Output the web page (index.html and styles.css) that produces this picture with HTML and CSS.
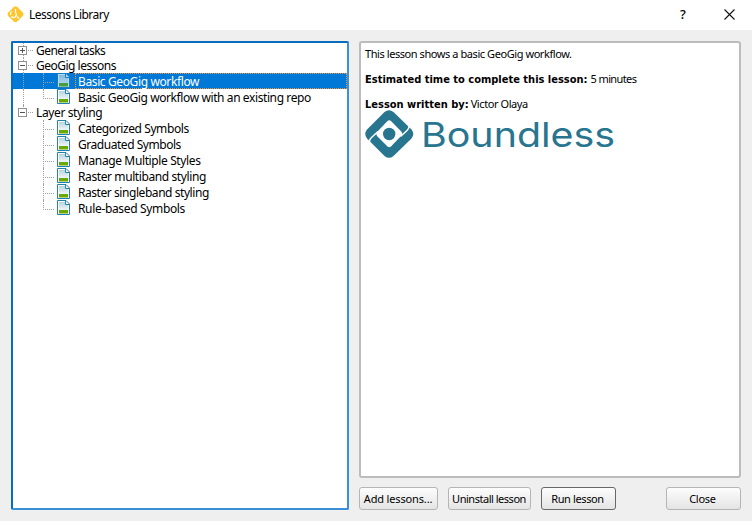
FILE: index.html
```html
<!DOCTYPE html>
<html lang="en">
<head>
<meta charset="utf-8">
<title>Lessons Library</title>
<link rel="stylesheet" href="styles.css">
</head>
<body>
<svg class="defs" width="0" height="0" aria-hidden="true">
  <defs>
    <linearGradient id="sky" x1="0" y1="0" x2="0" y2="1"><stop offset="0" stop-color="#b5d4df"/><stop offset="1" stop-color="#edf5f7"/></linearGradient>
    <symbol id="doc" viewBox="0 0 13 15">
      <path d="M.5.5H9L12.500 4V14.500H.5Z" fill="#fff" stroke="#2280b4"/>
      <path d="M2 2H8V5H11V10H2Z" fill="url(#sky)"/>
      <path d="M2 10H11V13.500H2Z" fill="#69aa00"/>
      <path d="M8.500 1V4.500H12" fill="none" stroke="#2280b4"/>
    </symbol>
  </defs>
</svg>
<div class="window">
  <header class="titlebar">
    <svg class="app-icon" width="17" height="17" viewBox="0 0 17 17"><path d="M6.500 1.200Q8.500-.6 10.500 1.200L15.500 6.200Q17.300 8.200 15.500 10.300L10.500 15.300Q8.500 17 6.500 15.300L1.500 10.300Q-.3 8.200 1.500 6.200Z" fill="#fdc62f"/><path d="M8.500 3V6.500Q10.500 9 8 11Q6 12.300 4.500 10.500M4.500 5.500Q3 7 3.700 9M10 10.500L12 12.500" fill="none" stroke="#fff" stroke-width="1.200"/></svg>
    <h1 class="title">Lessons Library</h1>
    <span class="help">?</span>
    <svg class="close" width="11" height="11" viewBox="0 0 11 11"><path d="M.5.5 10.500 10.500M10.500.5.5 10.500" stroke="#111" stroke-width="1.100"/></svg>
  </header>
  <main class="content">
    <section class="tree">
      <div class="row root first"><i class="box plus"></i><span class="t1">General tasks</span></div>
      <div class="row root"><i class="box"></i><span class="t2">GeoGig lessons</span></div>
      <div class="row child through selected"><svg class="doc"><use href="#doc"/></svg><span class="label"><span class="t3">Basic GeoGig workflow</span></span></div>
      <div class="row child through last"><svg class="doc"><use href="#doc"/></svg><span class="label"><span class="t4">Basic GeoGig workflow with an existing repo</span></span></div>
      <div class="row root end"><i class="box"></i><span class="t5">Layer styling</span></div>
      <div class="row child"><svg class="doc"><use href="#doc"/></svg><span class="label"><span class="t6">Categorized Symbols</span></span></div>
      <div class="row child"><svg class="doc"><use href="#doc"/></svg><span class="label"><span class="t7">Graduated Symbols</span></span></div>
      <div class="row child"><svg class="doc"><use href="#doc"/></svg><span class="label"><span class="t8">Manage Multiple Styles</span></span></div>
      <div class="row child"><svg class="doc"><use href="#doc"/></svg><span class="label"><span class="t9">Raster multiband styling</span></span></div>
      <div class="row child"><svg class="doc"><use href="#doc"/></svg><span class="label"><span class="t10">Raster singleband styling</span></span></div>
      <div class="row child last"><svg class="doc"><use href="#doc"/></svg><span class="label"><span class="t11">Rule-based Symbols</span></span></div>
    </section>
    <section class="side">
      <article class="details">
        <p class="d1">This lesson shows a basic GeoGig workflow.</p>
        <p><b class="b1">Estimated time to complete this lesson:</b><span class="d2">5 minutes</span></p>
        <p><b class="b2">Lesson written by:</b><span class="d3">Victor Olaya</span></p>
        <div class="brand">
          <svg width="49" height="49" viewBox="0 0 49 49">
            <path d="M19.500 2Q24-1.700 28.500 2L46.500 19.500Q50 24 46.500 28.500L28.500 46Q24 49.700 19.500 46L2 28.500Q-1.500 24 2 19.500Z" fill="#28758f"/>
            <path d="M22.500 11Q24.200 9.500 26 11L36.500 21.700Q38 23.700 36.500 25.500L26 36.500Q24.200 38 22.500 36.500L12 26Q10.500 24 12 22Z" fill="#fff"/>
            <path d="M35.500 26.500L42 20.500Q45.200 17.500 43.500 12.500M13 21.500L6.500 27.500Q3.200 30.500 5 35.500" fill="none" stroke="#fff" stroke-width="1.500"/>
            <circle cx="24.200" cy="24" r="6.200" fill="#28758f"/>
          </svg>
          <span class="wordmark">Boundless</span>
        </div>
      </article>
      <footer class="buttons">
        <button class="add"><span class="u1">Add lessons...</span></button>
        <button class="uninstall"><span class="u2">Uninstall lesson</span></button>
        <button class="run"><span class="u3">Run lesson</span></button>
        <button class="dismiss"><span class="u4">Close</span></button>
      </footer>
    </section>
  </main>
</div>
</body>
</html>
```
FILE: styles.css
```css
* { box-sizing: border-box; }
body { margin: 0; background: #efefef; color: #000; font: 12px/16px "Noto Sans", "Open Sans", sans-serif; }
.defs { position: absolute; }
.window { width: 752px; height: 521px; overflow: hidden; }
.titlebar { height: 30px; background: #fff; display: flex; align-items: center; padding: 0 18px 2px 7px; }
.app-icon { margin-right: 5px; }
.title { margin: 2px 0 0; font-size: 12px; font-weight: 400; letter-spacing: -.5px; }
.help { margin-left: auto; width: 10px; font-size: 13px; font-weight: 500; text-align: center; }
.close { margin-left: 36px; margin-right: -1px; }
.content { display: flex; gap: 10px; padding: 11px; height: 491px; }
.tree { width: 338px; border: 2px solid #0a6cbd; border-right-color: #3a91da; border-bottom-color: #3a91da; border-radius: 2px; background: #fff; white-space: nowrap; }
.row { display: flex; align-items: center; height: 16px; position: relative; }
.root { height: 15px; line-height: 15px; padding-left: 5px; }
.box { width: 9px; height: 9px; margin-right: 9px; border: 1px solid #919191; position: relative; background: linear-gradient(#555, #555) center / 5px 1px no-repeat #fff; flex: none; z-index: 1; }
.plus { background: linear-gradient(#555, #555) center / 5px 1px no-repeat, linear-gradient(#555, #555) center / 1px 5px no-repeat, #fff; }
.box::after { content: ""; position: absolute; left: 9px; top: 3px; width: 5px; border-top: 1px dotted #a0a0a0; }
.root::before, .through::after { content: ""; position: absolute; left: 10px; top: 0; height: 100%; border-left: 1px dotted #a0a0a0; }
.end::before { height: 6px; }
.child { padding-left: 44px; }
.child::before { content: ""; position: absolute; left: 30px; top: 0; width: 10px; height: 9px; border-left: 1px dotted #a0a0a0; border-bottom: 1px dotted #a0a0a0; }
.child:not(.last) .label::before { content: ""; position: absolute; left: 30px; top: 9px; height: 7px; border-left: 1px dotted #a0a0a0; }
.doc { width: 13px; height: 15px; margin-right: 5px; flex: none; align-self: flex-start; }
.label { flex: 1; height: 16px; padding-left: 3px; line-height: 18px; }
.selected { background: #0078d7; color: #fff; }
.selected .label { border: 1px dotted #f0953c; padding-left: 2px; line-height: 16px; }
.selected .doc { opacity: .72; }
.t1 { letter-spacing: -.54px; }
.t2 { letter-spacing: -.5px; }
.t3, .t5, .t8 { letter-spacing: -.38px; }
.t4, .t6, .t9 { letter-spacing: -.4px; }
.t7 { letter-spacing: -.46px; }
.t10 { letter-spacing: -.44px; }
.t11 { letter-spacing: -.34px; }
.side { width: 382px; display: flex; flex-direction: column; gap: 9px; }
.details { height: 437px; border: 2px solid #bcbcbc; border-radius: 3px; background: #fff; padding: 3px 4px; font: 11px/15px "Noto Sans", sans-serif; white-space: nowrap; }
.details p { margin: 0 0 10px; height: 15px; display: flex; gap: 3px; }
.details p:nth-child(3) { margin: 0; }
.details b { font: bold 11px/17px "DejaVu Sans Condensed", "DejaVu Sans", sans-serif; }
.d1 { letter-spacing: -.43px; }
.d2 { letter-spacing: -.62px; }
.d3 { margin-left: -1px; letter-spacing: -.42px; }
.brand { display: flex; align-items: center; gap: 8px; margin-top: -1px; color: #28758f; }
.wordmark { margin-left: -1px; font: 34px/49px Inter, sans-serif; transform: scaleX(1.158); transform-origin: 0 50%; }
.buttons { display: flex; gap: 10px; }
button { height: 23px; padding: 0; border: 1px solid #b5b5b5; border-radius: 3px; background: linear-gradient(#fdfdfd, #e4e4e4); color: #000; font: 11px/19px "Noto Sans", sans-serif; white-space: nowrap; }
.add { width: 79px; letter-spacing: -.15px; padding-right: 1px; }
.uninstall { width: 83px; letter-spacing: -.48px; padding-right: 1px; }
.run { width: 75px; border-color: #686868; letter-spacing: -.38px; padding-right: 2px; }
.dismiss { width: 75px; margin-left: auto; letter-spacing: -.25px; padding-right: 2px; }
```
